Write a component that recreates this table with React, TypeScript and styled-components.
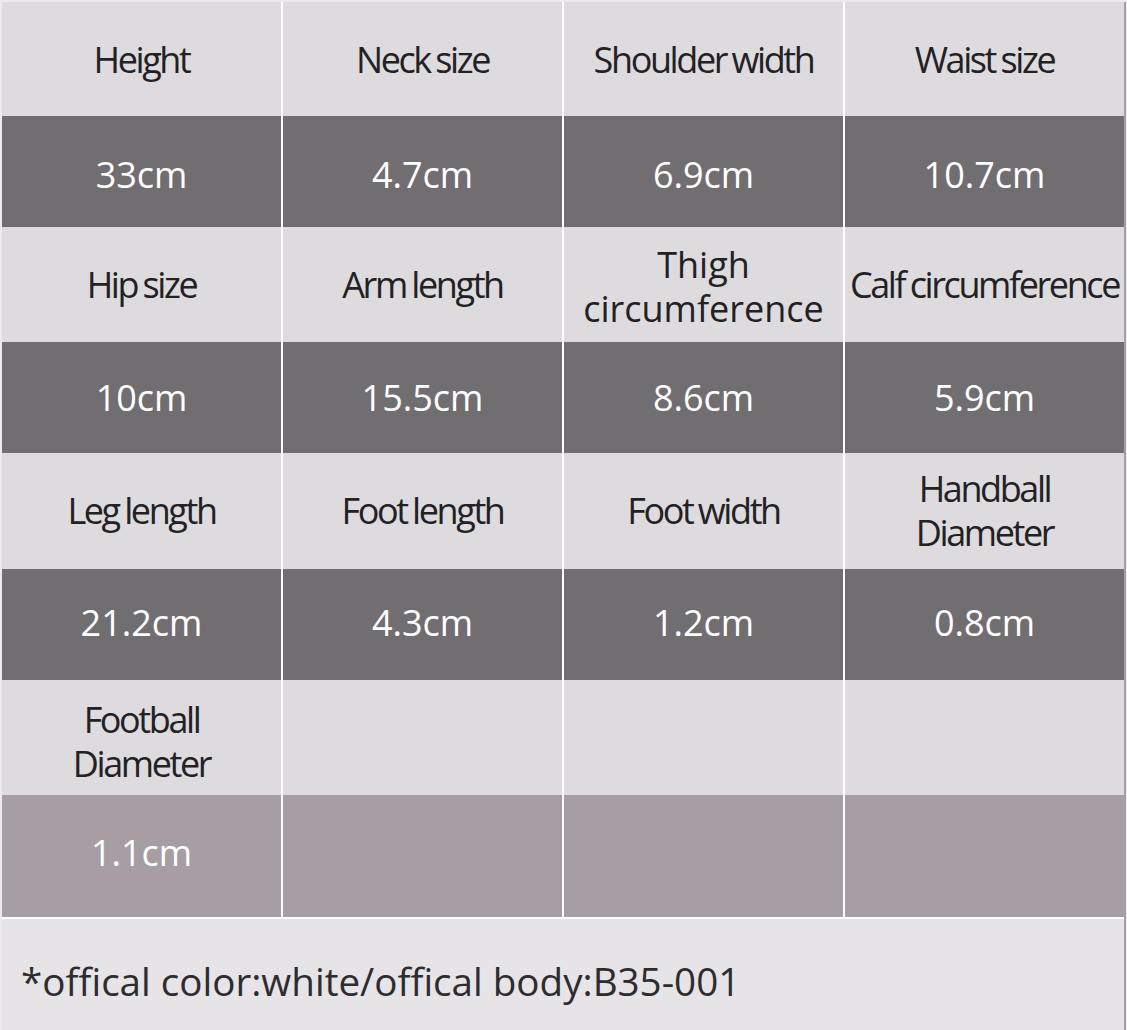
import React from "react";
import styled, { createGlobalStyle } from "styled-components";

const Global = createGlobalStyle`
  html, body { margin: 0; padding: 0; background: #eceaed; }
  * { box-sizing: border-box; }
`;

type Tone = "light" | "dark" | "mauve";

const toneBg: Record<Tone, string> = {
  light: "#dddbde",
  dark: "#716e72",
  mauve: "#a69ea3",
};

const Page = styled.div`
  width: 1127px;
  height: 1030px;
  padding: 2px 0 0 2px;
  background: #eceaed;
  display: flex;
  flex-direction: column;
`;

const Sheet = styled.div`
  width: 1124px;
  flex: 1;
  display: flex;
  flex-direction: column;
  border-right: 2px solid #a3a1a4;
`;

const Table = styled.div`
  display: flex;
  flex-direction: column;
  background: #ffffff;
  padding-bottom: 2px;
`;

const Row = styled.div<{ $h: number }>`
  display: grid;
  grid-template-columns: repeat(4, 279px);
  column-gap: 2px;
  height: ${(p) => p.$h}px;
`;

const Cell = styled.div<{ $tone: Tone; $shift?: number }>`
  background: ${(p) => toneBg[p.$tone]};
  display: flex;
  align-items: center;
  justify-content: center;
  text-align: center;
  white-space: nowrap;
  padding-top: ${(p) => Math.max(0, p.$shift ?? 0)}px;
  padding-bottom: ${(p) => Math.max(0, -(p.$shift ?? 0))}px;
`;

const Label = styled.span`
  font-family: "Open Sans", "Noto Sans", sans-serif;
  font-size: 36px;
  line-height: 44px;
  letter-spacing: -2.4px;
  word-spacing: -1.5px;
  color: #222124;
`;

const WideLabel = styled.span`
  font-family: "Open Sans", "Noto Sans", sans-serif;
  font-size: 36px;
  line-height: 44px;
  color: #222124;
  padding-top: 4px;
`;

const Value = styled.span`
  font-family: "Open Sans", "Noto Sans", sans-serif;
  font-size: 36px;
  line-height: 44px;
  color: #ffffff;
`;

const Footer = styled.div`
  flex: 1;
  background: #e6e4e7;
  display: flex;
  align-items: center;
  padding: 12px 0 0 19px;
`;

const Note = styled.span`
  font-family: "Open Sans", "Noto Sans", sans-serif;
  font-size: 38.6px;
  color: #2d2c2f;
`;

type LabelRow = { h: number; shift: number; items: React.ReactNode[] };
type ValueRow = { h: number; shift: number; tone: Tone; items: string[] };

const rows: (LabelRow | ValueRow)[] = [
  { h: 114, shift: 1, items: ["Height", "Neck size", "Shoulder width", "Waist size"] },
  { h: 111, shift: 7, tone: "dark", items: ["33cm", "4.7cm", "6.9cm", "10.7cm"] },
  {
    h: 115,
    shift: 0,
    items: [
      "Hip size",
      "Arm length",
      <WideLabel key="t">
        Thigh
        <br />
        circumference
      </WideLabel>,
      "Calf circumference",
    ],
  },
  { h: 111, shift: 1, tone: "dark", items: ["10cm", "15.5cm", "8.6cm", "5.9cm"] },
  {
    h: 116,
    shift: 0,
    items: [
      "Leg length",
      "Foot length",
      "Foot width",
      <Label key="h">
        Handball
        <br />
        Diameter
      </Label>,
    ],
  },
  { h: 111, shift: -4, tone: "dark", items: ["21.2cm", "4.3cm", "1.2cm", "0.8cm"] },
  {
    h: 115,
    shift: 8,
    items: [
      <Label key="f">
        Football
        <br />
        Diameter
      </Label>,
      "",
      "",
      "",
    ],
  },
  { h: 122, shift: -6, tone: "mauve", items: ["1.1cm", "", "", ""] },
];

export default function App() {
  return (
    <>
      <Global />
      <Page>
        <Sheet>
          <Table>
            {rows.map((r, i) =>
              "tone" in r ? (
                <Row key={i} $h={r.h}>
                  {r.items.map((v, j) => (
                    <Cell key={j} $tone={r.tone} $shift={r.shift}>
                      {v && <Value>{v}</Value>}
                    </Cell>
                  ))}
                </Row>
              ) : (
                <Row key={i} $h={r.h}>
                  {r.items.map((v, j) => (
                    <Cell key={j} $tone="light" $shift={r.shift}>
                      {typeof v === "string" ? v && <Label>{v}</Label> : v}
                    </Cell>
                  ))}
                </Row>
              )
            )}
          </Table>
          <Footer>
            <Note>*offical color:white/offical body:B35-001</Note>
          </Footer>
        </Sheet>
      </Page>
    </>
  );
}
